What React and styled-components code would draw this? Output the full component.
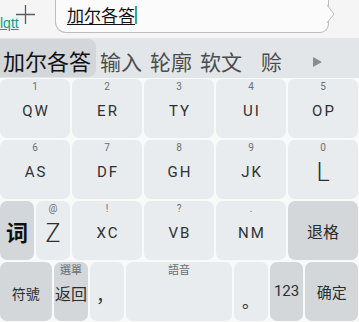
import React from "react";
import styled, { createGlobalStyle } from "styled-components";

const GlobalStyle = createGlobalStyle`
    html, body {
        margin: 0;
        padding: 0;
        background: #f5f5f5;
    }
    body {
        font-family: Roboto, "Noto Sans CJK SC", "Noto Sans", sans-serif;
    }
`;

const Screen = styled.div`
    width: 359px;
    height: 322px;
    overflow: hidden;
    display: flex;
    flex-direction: column;
    background: #f5f5f5;
`;

const TopBar = styled.div`
    position: relative;
    height: 38px;
    display: flex;
    align-items: flex-start;
`;

const PlusButton = styled.div`
    width: 55px;
    height: 30px;
    display: flex;
    justify-content: center;
    align-items: flex-start;
    padding: 5px 5px 0 0;
    box-sizing: border-box;
`;

const Composing = styled.span`
    position: absolute;
    left: 0;
    top: 16px;
    padding: 0 1px 0 0;
    background: #eef4f2;
    color: #1c9a86;
    font-family: "Liberation Sans", sans-serif;
    font-size: 14px;
    line-height: 14px;
    text-decoration: underline;
`;

const Bubble = styled.div`
    position: relative;
    width: 274px;
    height: 33px;
    box-sizing: border-box;
    border: 1px solid #bdbdbd;
    border-top: none;
    border-radius: 0 0 9px 11px;
    background: #fbfbfb;
    display: flex;
    align-items: center;
    padding-left: 11px;
`;

const Pointer = styled.svg`
    position: absolute;
    right: -8px;
    top: 4px;
`;

const InputText = styled.span`
    font-family: "Noto Sans CJK SC", sans-serif;
    font-size: 17px;
    line-height: 20px;
    color: #111;
    text-decoration: underline;
    text-underline-offset: 2px;
    margin-top: -3px;
`;

const Caret = styled.span`
    display: inline-block;
    width: 1.5px;
    height: 18px;
    background: #2aa9a0;
    margin-top: -3px;
`;

const CandidateBar = styled.div`
    height: 40px;
    background: #e3e6e8;
    display: flex;
    align-items: center;
    font-family: "Noto Sans CJK SC", sans-serif;
`;

const Candidate = styled.div`
    height: ${(p) => (p.$active ? "38px" : "40px")};
    margin-top: ${(p) => (p.$active ? "-1px" : "0")};
    display: flex;
    align-items: center;
    padding: ${(p) => (p.$active ? "0 5px 0 3px" : "0 4px")};
    margin-left: ${(p) => p.$gap || 0}px;
    background: ${(p) => (p.$active ? "#d3d7da" : "transparent")};
    border-radius: 0 8px 8px 0;
    font-size: ${(p) => (p.$active ? "22px" : "21px")};
    color: ${(p) => (p.$active ? "#111" : "#4a4d50")};
    white-space: nowrap;
    padding-top: 5px;
    box-sizing: border-box;
`;

const MoreArrow = styled.div`
    margin-left: 27px;
    margin-top: 7px;
    width: 0;
    height: 0;
    border-top: 5px solid transparent;
    border-bottom: 5px solid transparent;
    border-left: 9px solid #8a8d90;
`;

const Keyboard = styled.div`
    flex: 1;
    background: #f8f9f9;
    padding: 1px 1px 1px 0;
    display: flex;
    flex-direction: column;
    gap: 2px;
`;

const Row = styled.div`
    height: 59px;
    display: grid;
    grid-template-columns: ${(p) => p.$cols};
    gap: 2px;
`;

const Key = styled.div`
    position: relative;
    border-radius: 7px;
    background: ${(p) => (p.$dark ? "#d3d7da" : "#e9ecee")};
    display: flex;
    flex-direction: column;
    align-items: center;
    justify-content: center;
    color: #2e3134;
`;

const Hint = styled.span`
    position: absolute;
    top: 1px;
    left: 0;
    right: 0;
    text-align: center;
    font-size: ${(p) => (p.$cjk ? "11px" : "10px")};
    font-family: ${(p) => (p.$cjk ? '"Noto Sans CJK TC", sans-serif' : "Roboto, sans-serif")};
    color: #6b6e71;
    line-height: 13px;
`;

const Letters = styled.span`
    font-family: Roboto, sans-serif;
    font-size: ${(p) => p.$size || 15}px;
    font-weight: ${(p) => (p.$thin ? 300 : 400)};
    letter-spacing: ${(p) => (p.$plain ? 0 : 2)}px;
    margin-left: ${(p) => (p.$plain ? 0 : 2)}px;
    margin-top: ${(p) => (p.$plain ? 0 : 5)}px;
    line-height: 1;
`;

const Label = styled.span`
    font-family: "Noto Sans CJK SC", sans-serif;
    font-size: ${(p) => p.$size || 16}px;
    font-weight: ${(p) => (p.$bold ? 700 : 400)};
    color: ${(p) => (p.$bold ? "#111" : "#2a2d30")};
    margin-top: ${(p) => p.$top || 0}px;
    line-height: 1;
`;

const Punct = styled.span`
    position: absolute;
    left: ${(p) => p.$left}px;
    bottom: ${(p) => p.$bottom}px;
    font-family: "Noto Sans CJK SC", sans-serif;
    font-size: 17px;
    color: #2a2d30;
    line-height: 1;
`;

const letterKey = (hint, text, props = {}) => (
    <Key key={text}>
        <Hint>{hint}</Hint>
        <Letters {...props}>{text}</Letters>
    </Key>
);

const App = () => {
    return (
        <Screen>
            <GlobalStyle />
            <TopBar>
                <PlusButton>
                    <svg width="19" height="19" viewBox="0 0 19 19">
                        <path d="M9.5 0 V19 M0 9.5 H19" stroke="#5a5d60" strokeWidth="1.3" fill="none" />
                    </svg>
                </PlusButton>
                <Composing>lqtt</Composing>
                <Bubble>
                    <InputText>加尔各答</InputText>
                    <Caret />
                    <Pointer width="9" height="20" viewBox="0 0 9 20">
                        <path d="M0 1 L7 10 L0 19" fill="#fbfbfb" stroke="#bdbdbd" strokeWidth="1" />
                    </Pointer>
                </Bubble>
            </TopBar>

            <CandidateBar>
                <Candidate $active>加尔各答</Candidate>
                <Candidate>输入</Candidate>
                <Candidate>轮廓</Candidate>
                <Candidate>软文</Candidate>
                <Candidate $gap={11}>赊</Candidate>
                <MoreArrow />
            </CandidateBar>

            <Keyboard>
                <Row $cols="repeat(5, 1fr)">
                    {letterKey("1", "QW")}
                    {letterKey("2", "ER")}
                    {letterKey("3", "TY")}
                    {letterKey("4", "UI")}
                    {letterKey("5", "OP")}
                </Row>
                <Row $cols="repeat(5, 1fr)">
                    {letterKey("6", "AS")}
                    {letterKey("7", "DF")}
                    {letterKey("8", "GH")}
                    {letterKey("9", "JK")}
                    {letterKey("0", "L", { $size: 25, $thin: true })}
                </Row>
                <Row $cols="34fr 34fr 70fr 70fr 70fr 70fr">
                    <Key $dark>
                        <Label $size={22} $bold>词</Label>
                    </Key>
                    {letterKey("@", "Z", { $size: 25, $thin: true })}
                    {letterKey("!", "XC")}
                    {letterKey("?", "VB")}
                    {letterKey(".", "NM")}
                    <Key $dark>
                        <Label $size={16}>退格</Label>
                    </Key>
                </Row>
                <Row $cols="52fr 35fr 34fr 107fr 34fr 34fr 53fr">
                    <Key $dark>
                        <Label $size={14} $top={2}>符號</Label>
                    </Key>
                    <Key $dark>
                        <Hint $cjk>選單</Hint>
                        <Label $size={16} $top={2}>返回</Label>
                    </Key>
                    <Key>
                        <Punct $left={6} $bottom={18}>，</Punct>
                    </Key>
                    <Key>
                        <Hint $cjk>語音</Hint>
                    </Key>
                    <Key>
                        <Punct $left={8} $bottom={12}>。</Punct>
                    </Key>
                    <Key $dark>
                        <Letters $size={15} $plain>123</Letters>
                    </Key>
                    <Key $dark>
                        <Label $size={15}>确定</Label>
                    </Key>
                </Row>
            </Keyboard>
        </Screen>
    );
};

export default App;
